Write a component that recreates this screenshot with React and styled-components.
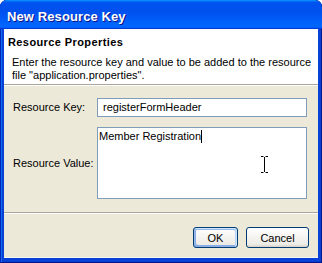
import React from 'react';
import styled, { createGlobalStyle } from 'styled-components';

const GlobalStyle = createGlobalStyle`
  html, body {
    margin: 0;
    padding: 0;
    background: #ffffff;
  }
  body {
    font-family: "Liberation Sans", Arial, sans-serif;
    font-size: 11px;
    color: #000;
  }
`;

const Window = styled.div`
  width: 322px;
  height: 263px;
  box-sizing: border-box;
  display: flex;
  flex-direction: column;
  background: #0841d8;
  border-radius: 7px 7px 0 0;
  padding: 0 4px 5px 4px;
  box-shadow: inset 1px 0 #0026b8, inset -1px 0 #001a8c, inset 0 -1px #00138c,
    inset 2px 0 #166aee, inset -2px 0 #0a3fd0, inset 0 -2px #0a3fd0;
  overflow: hidden;
`;

const TitleBar = styled.div`
  height: 29px;
  margin: 0 -4px;
  flex: none;
  display: flex;
  align-items: center;
  padding: 0 7px;
  border-radius: 7px 7px 0 0;
  background: linear-gradient(
    180deg,
    #0997ff,
    #0053ee 8%,
    #0050ee 40%,
    #0066ff 88%,
    #0066ff 93%,
    #005bff 95%,
    #003dd7 96%,
    #003dd7
  );
`;

const TitleText = styled.span`
  font-family: "Liberation Sans", Arial, sans-serif;
  font-weight: bold;
  font-size: 13px;
  color: #fff;
  letter-spacing: 0.1px;
  text-shadow: 1px 1px #0f1089;
  margin-top: 3px;
`;

const Body = styled.div`
  flex: 1;
  display: flex;
  flex-direction: column;
  background: #ece9d8;
  border-bottom: 1px solid #f6f5ee;
`;

const Header = styled.div`
  height: 56px;
  box-sizing: border-box;
  background: #fff;
  padding: 6px 4px 0 4px;
  border-bottom: 1px solid #aca899;
  box-shadow: 0 1px #fff;
`;

const HeaderTitle = styled.div`
  font-weight: bold;
  font-size: 11px;
  letter-spacing: 0.4px;
  line-height: 14px;
`;

const HeaderText = styled.div`
  font-size: 11px;
  line-height: 13px;
  margin: 7px 0 0 4px;
`;

const Form = styled.div`
  display: grid;
  grid-template-columns: 84px 1fr;
  grid-template-rows: 19px 72px;
  row-gap: 10px;
  align-items: center;
  padding: 13px 11px 0 9px;
`;

const Label = styled.label`
  font-size: 11px;
  line-height: 13px;
`;

const TextField = styled.div`
  height: 19px;
  box-sizing: border-box;
  border: 1px solid #7f9db9;
  background: #fff;
  padding: 0 5px;
  font-size: 11px;
  line-height: 17px;
  white-space: nowrap;
`;

const TextArea = styled.div`
  position: relative;
  height: 72px;
  box-sizing: border-box;
  border: 1px solid #7f9db9;
  background: #fff;
  padding: 2px 1px;
  font-size: 11px;
  line-height: 13px;
`;

const Caret = styled.span`
  display: inline-block;
  width: 1px;
  height: 13px;
  background: #000;
  vertical-align: top;
`;

const MouseCursor = styled.svg`
  position: absolute;
  left: 163px;
  top: 28px;
`;

const Separator = styled.div`
  margin-top: 13px;
  height: 1px;
  background: #aca899;
  border-bottom: 1px solid #fff;
`;

const ButtonRow = styled.div`
  display: flex;
  justify-content: flex-end;
  gap: 8px;
  padding: 13px 9px 0 0;
`;

const Button = styled.button`
  width: ${p => p.$width}px;
  height: 21px;
  box-sizing: border-box;
  border: 1px solid #003c74;
  border-radius: 3px;
  padding: 0;
  font-family: "Liberation Sans", Arial, sans-serif;
  font-size: 11px;
  color: #000;
  background: linear-gradient(180deg, #fff, #ecebe6 86%, #d6d0c5);
  box-shadow: ${p =>
    p.$default
      ? 'inset -1px 1px #cee7ff, inset 1px 2px #98b8ea, inset -2px 2px #bcd4f6, inset 1px -1px #89ade4, inset 2px -2px #89ade4'
      : 'none'};
`;

export default function App() {
  return (
    <>
      <GlobalStyle />
      <Window>
        <TitleBar>
          <TitleText>New Resource Key</TitleText>
        </TitleBar>
        <Body>
          <Header>
            <HeaderTitle>Resource Properties</HeaderTitle>
            <HeaderText>
              Enter the resource key and value to be added to the resource
              <br />
              file "application.properties".
            </HeaderText>
          </Header>
          <Form>
            <Label>Resource Key:</Label>
            <TextField>registerFormHeader</TextField>
            <Label>Resource Value:</Label>
            <TextArea>
              Member Registration<Caret />
              <MouseCursor width="7" height="17" viewBox="0 0 7 17">
                <path d="M0 0.5H2.5M4.5 0.5H7M3.5 1V16M0 16.5H2.5M4.5 16.5H7" stroke="#000" strokeWidth="1" fill="none" />
              </MouseCursor>
            </TextArea>
          </Form>
          <Separator />
          <ButtonRow>
            <Button $width={45} $default>OK</Button>
            <Button $width={63}>Cancel</Button>
          </ButtonRow>
        </Body>
      </Window>
    </>
  );
}
